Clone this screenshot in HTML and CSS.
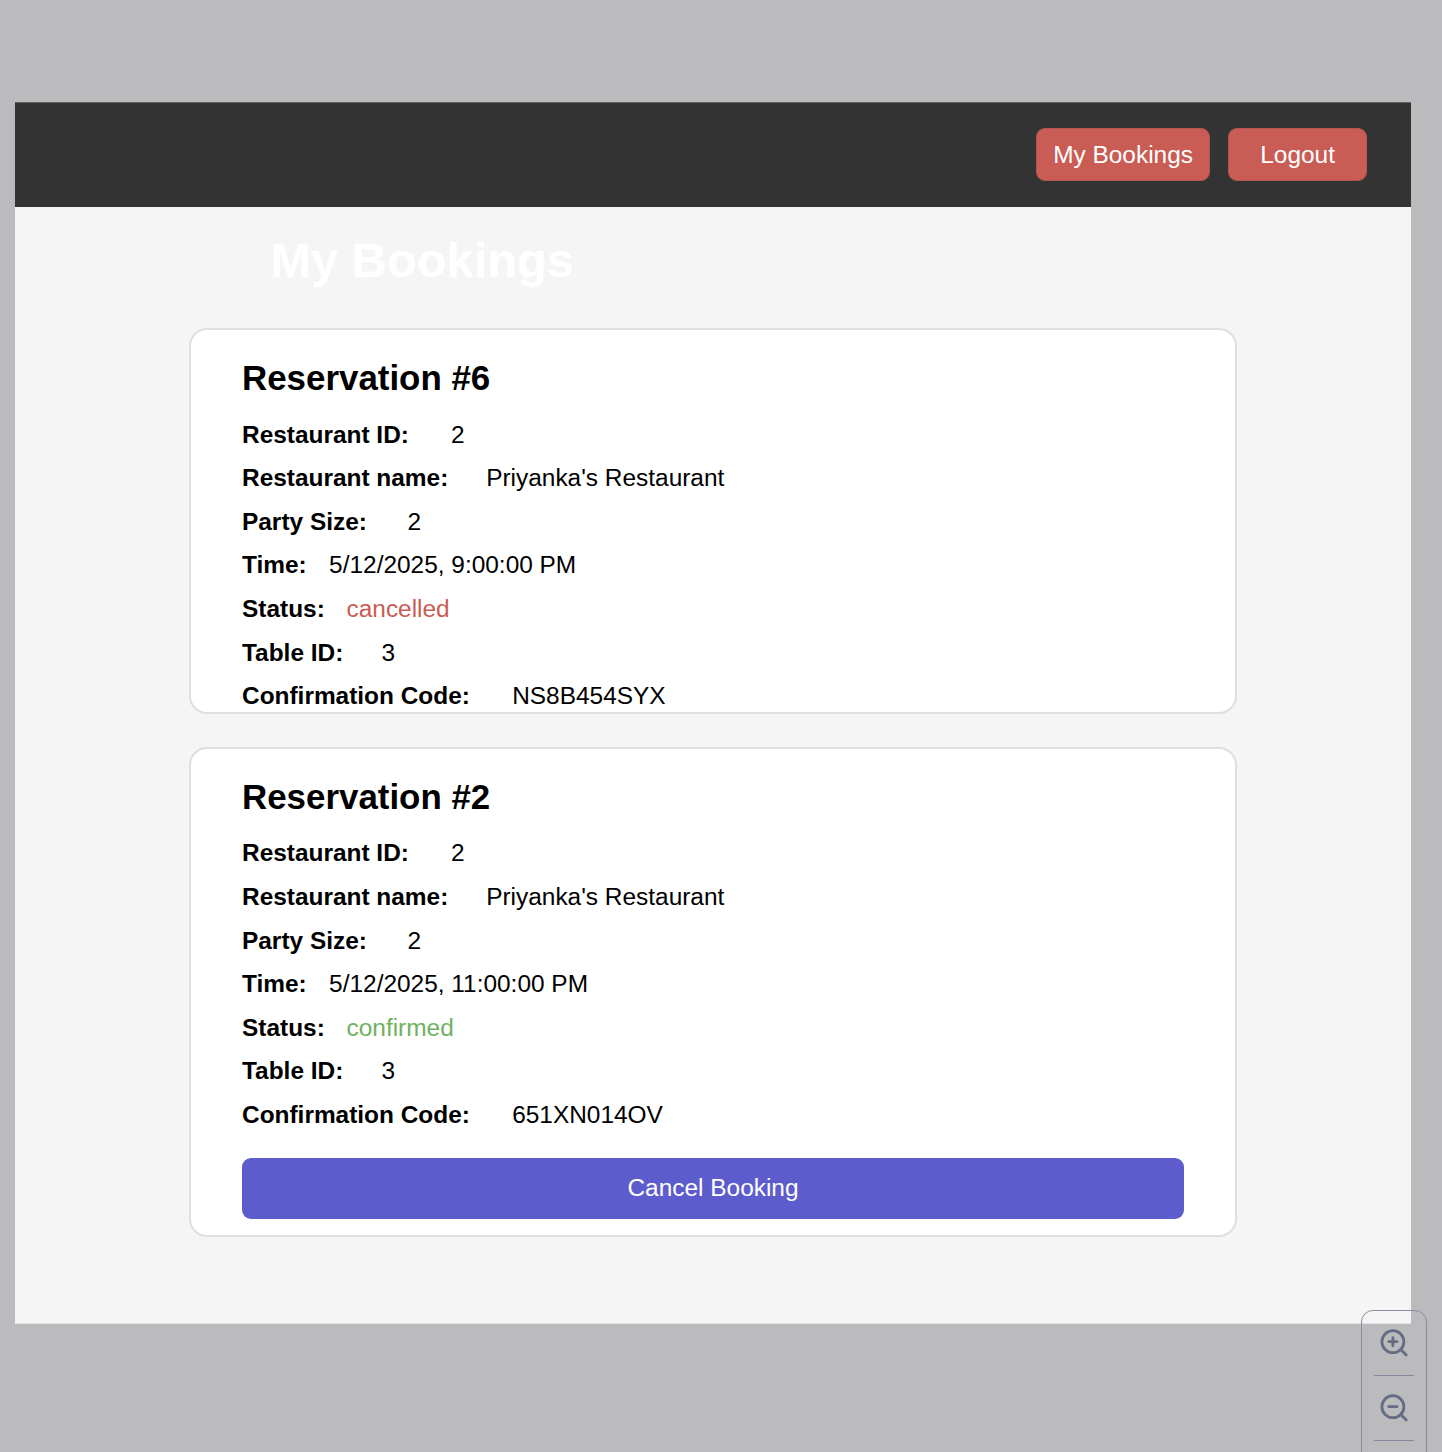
FILE: index.html
```html
<!DOCTYPE html>
<html lang="en">
<head>
<meta charset="utf-8">
<title>My Bookings</title>
<link rel="stylesheet" href="styles.css">
</head>
<body>
<main class="page">
  <header class="topbar">
    <button class="nav-button nav-bookings">My Bookings</button>
    <button class="nav-button nav-logout">Logout</button>
  </header>
  <h1 class="page-title">My Bookings</h1>
  <section class="bookings">
    <article class="card card-cancelled">
      <h2 class="card-title">Reservation #6</h2>
      <dl class="details">
        <div class="row"><dt class="w-id">Restaurant ID:</dt><dd>2</dd></div>
        <div class="row"><dt class="w-name">Restaurant name:</dt><dd>Priyanka's Restaurant</dd></div>
        <div class="row"><dt class="w-party">Party Size:</dt><dd>2</dd></div>
        <div class="row"><dt class="w-time">Time:</dt><dd>5/12/2025, 9:00:00 PM</dd></div>
        <div class="row"><dt class="w-status">Status:</dt><dd class="cancelled">cancelled</dd></div>
        <div class="row"><dt class="w-table">Table ID:</dt><dd>3</dd></div>
        <div class="row"><dt class="w-code">Confirmation Code:</dt><dd>NS8B454SYX</dd></div>
      </dl>
    </article>
    <article class="card card-confirmed">
      <h2 class="card-title">Reservation #2</h2>
      <dl class="details">
        <div class="row"><dt class="w-id">Restaurant ID:</dt><dd>2</dd></div>
        <div class="row"><dt class="w-name">Restaurant name:</dt><dd>Priyanka's Restaurant</dd></div>
        <div class="row"><dt class="w-party">Party Size:</dt><dd>2</dd></div>
        <div class="row"><dt class="w-time">Time:</dt><dd>5/12/2025, 11:00:00 PM</dd></div>
        <div class="row"><dt class="w-status">Status:</dt><dd class="confirmed">confirmed</dd></div>
        <div class="row"><dt class="w-table">Table ID:</dt><dd>3</dd></div>
        <div class="row"><dt class="w-code">Confirmation Code:</dt><dd>651XN014OV</dd></div>
      </dl>
      <button class="cancel-button">Cancel Booking</button>
    </article>
  </section>
</main>
<aside class="zoom-panel">
  <div class="zoom-item">
    <svg class="zoom-icon" viewBox="0 0 32 32"><circle cx="14.9" cy="14.7" r="11"/><path d="M22.8 22.6 28.2 28M10.8 14.7H19M14.9 10.6V18.8"/></svg>
  </div>
  <div class="zoom-item">
    <svg class="zoom-icon" viewBox="0 0 32 32"><circle cx="14.9" cy="14.7" r="11"/><path d="M22.8 22.6 28.2 28M10.8 14.7H19"/></svg>
  </div>
</aside>
</body>
</html>
```
FILE: styles.css
```css
* {
  box-sizing: border-box;
}

body {
  position: relative;
  height: 1452px;
  margin: 0;
  padding: 102px 31px 0 15px;
  overflow: hidden;
  background: #bbbbbd;
  color: #000;
  font-family: "Liberation Sans", Arial, sans-serif;
  font-size: 24.43px;
}

.page {
  height: 1222px;
  background: #f5f5f5;
  border-bottom: 1px solid #e0e2e3;
}

.topbar {
  display: flex;
  justify-content: flex-end;
  gap: 17.5px;
  height: 105px;
  padding: 25px 43.6px 0 0;
  background: #333;
  border-top: 1px solid #626262;
}

.nav-button {
  height: 53px;
  padding: 0;
  border: 1px solid #b4564f;
  border-radius: 9px;
  background: #c95c54;
  color: #fff;
  font: inherit;
}

.nav-bookings {
  width: 174.5px;
}

.nav-logout {
  width: 139.6px;
}

.page-title {
  height: 121px;
  margin: 0;
  padding: 26px 0 0 255.3px;
  color: #fff;
  font-size: 48.8px;
  line-height: 55px;
}

.bookings {
  display: flex;
  flex-direction: column;
  gap: 33px;
  width: 1048px;
  margin-left: 174px;
}

.card {
  padding: 28px 51px 0;
  border: 2px solid #dfdfdf;
  border-radius: 18px;
  background: #fff;
}

.card-cancelled {
  height: 386px;
}

.card-confirmed {
  height: 490px;
}

.card-title {
  margin: 0 0 14.55px;
  font-size: 34.9px;
  line-height: 40px;
}

.card-confirmed .card-title {
  margin-bottom: 14.25px;
}

.details {
  margin: 0;
}

.row {
  display: flex;
  height: 43.63px;
  line-height: 43.63px;
  white-space: nowrap;
}

.row dt {
  flex: none;
  font-weight: 700;
}

.row dd {
  margin: 0;
}

.w-id { width: 209.1px; }
.w-name { width: 244.2px; }
.w-party { width: 165.5px; }
.w-time { width: 87.1px; }
.w-status { width: 104.5px; }
.w-table { width: 139.4px; }
.w-code { width: 270.2px; }

.cancelled {
  color: #c95c54;
}

.confirmed {
  color: #6fb15f;
}

.cancel-button {
  display: block;
  width: 100%;
  height: 61px;
  margin-top: 21.3px;
  padding: 0 0 1px;
  border: 0;
  border-radius: 9px;
  background: #5d5ccd;
  color: #fff;
  font: inherit;
}

/* Zoom control floating over the canvas corner */
.zoom-panel {
  position: absolute;
  top: 1310px;
  left: 1361px;
  width: 66px;
  height: 200px;
  padding: 0 12px;
  border: 1px solid #888c9f;
  border-radius: 12px;
}

.zoom-item {
  height: 65px;
  padding: 16px 4px 0;
  border-bottom: 1px solid #85879b;
}

.zoom-icon {
  display: block;
  width: 32px;
  height: 32px;
  fill: none;
  stroke: #656d84;
  stroke-width: 2.8;
  stroke-linecap: round;
}
```
